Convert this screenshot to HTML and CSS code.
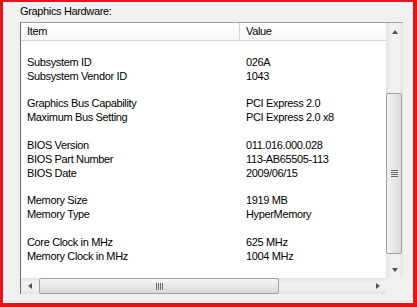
FILE: index.html
```html
<!DOCTYPE html>
<html lang="en">
<head>
  <meta charset="UTF-8" />
  <title>Graphics Hardware</title>
  <link rel="stylesheet" href="styles.css">
</head>
<body>
  <div class="frame">
    <div class="caption">Graphics Hardware:</div>

    <div class="listbox">
      <div class="view">
        <div class="header">
          <div class="col col-item">Item</div>
          <div class="col col-value">Value</div>
        </div>
        <div class="rows">
          <div class="row"><span></span><span></span></div>
          <div class="row"><span>Subsystem ID</span><span>026A</span></div>
          <div class="row"><span>Subsystem Vendor ID</span><span>1043</span></div>
          <div class="row"><span></span><span></span></div>
          <div class="row"><span>Graphics Bus Capability</span><span>PCI Express 2.0</span></div>
          <div class="row"><span>Maximum Bus Setting</span><span>PCI Express 2.0 x8</span></div>
          <div class="row"><span></span><span></span></div>
          <div class="row"><span>BIOS Version</span><span>011.016.000.028</span></div>
          <div class="row"><span>BIOS Part Number</span><span>113-AB65505-113</span></div>
          <div class="row"><span>BIOS Date</span><span>2009/06/15</span></div>
          <div class="row"><span></span><span></span></div>
          <div class="row"><span>Memory Size</span><span>1919 MB</span></div>
          <div class="row"><span>Memory Type</span><span>HyperMemory</span></div>
          <div class="row"><span></span><span></span></div>
          <div class="row"><span>Core Clock in MHz</span><span>625 MHz</span></div>
          <div class="row"><span>Memory Clock in MHz</span><span>1004 MHz</span></div>
        </div>
      </div>

      <div class="vscroll">
        <div class="btn"><span class="arrow up"></span></div>
        <div class="track">
          <div class="vthumb"><span class="grip"></span></div>
        </div>
        <div class="btn"><span class="arrow down"></span></div>
      </div>

      <div class="hscroll">
        <div class="btn"><span class="arrow left"></span></div>
        <div class="track">
          <div class="hthumb"><span class="grip"></span></div>
        </div>
        <div class="btn"><span class="arrow right"></span></div>
      </div>

      <div class="corner"></div>
    </div>
  </div>
</body>
</html>
```

FILE: styles.css
```css
* {
  box-sizing: border-box;
}
body {
  margin: 0;
  font-family: "Liberation Sans", Arial, sans-serif;
  font-size: 11px;
  letter-spacing: -0.35px;
  color: #000;
}
.frame {
  width: 417px;
  height: 307px;
  background: #f0f0f0;
  border-style: solid;
  border-color: #e8141b;
  border-width: 2px 4px 4px 3px;
  padding: 3px 0 0 17px;
}
.caption {
  height: 17px;
  line-height: 13px;
}
.listbox {
  width: 383px;
  height: 272px;
  background: #fff;
  border-top: 1px solid #a0a0a0;
  border-left: 1px solid #6e6e6e;
  display: grid;
  grid-template-columns: 1fr 17px;
  grid-template-rows: 1fr 16px;
}
.view {
  overflow: hidden;
}
.header {
  display: flex;
  height: 18px;
  background: linear-gradient(#ffffff, #f7f8fa);
  border-bottom: 1px solid #d5d5d5;
}
.col {
  line-height: 17px;
  padding-left: 6px;
}
.col-item {
  width: 219px;
  border-right: 1px solid #d5d5d5;
}
.col-value {
  flex: 1;
}
.rows {
  padding-top: 1px;
}
.row {
  display: flex;
  height: 13.86px;
  line-height: 13.86px;
}
.row span:first-child {
  width: 219px;
  padding-left: 6px;
}
.row span:last-child {
  padding-left: 6px;
}
.vscroll {
  display: flex;
  flex-direction: column;
  background: linear-gradient(90deg, #e4e4e4, #f0f0f0 30%, #f0f0f0 70%, #e4e4e4);
}
.hscroll {
  display: flex;
  background: linear-gradient(#e4e4e4, #f0f0f0 30%, #f0f0f0 70%, #e4e4e4);
}
.corner {
  background: #f0f0f0;
}
.btn {
  flex: 0 0 17px;
  display: flex;
  align-items: center;
  justify-content: center;
}
.track {
  flex: 1;
  display: flex;
}
.vscroll .track {
  flex-direction: column;
}
.vthumb {
  margin: 53px 1px 7px 0;
  flex: 1;
  border: 1px solid #a0a0a0;
  border-radius: 2px;
  background: linear-gradient(90deg, #f2f2f2, #e8e8e8 50%, #dadada);
  display: flex;
  align-items: center;
  justify-content: center;
}
.hthumb {
  margin: 0 90px 0 1px;
  flex: 1;
  border: 1px solid #a0a0a0;
  border-radius: 2px;
  background: linear-gradient(#f4f4f4, #e8e8e8 50%, #d8d8d8);
  display: flex;
  align-items: center;
  justify-content: center;
}
.vthumb .grip {
  width: 7px;
  height: 7px;
  background: repeating-linear-gradient(#6a6a6a 0 1px, transparent 1px 2px);
}
.hthumb .grip {
  width: 7px;
  height: 7px;
  background: repeating-linear-gradient(90deg, #6a6a6a 0 1px, transparent 1px 2px);
}
.arrow {
  width: 0;
  height: 0;
  border: 3px solid transparent;
}
.arrow.up {
  border-bottom: 4px solid #505050;
  border-top-width: 0;
}
.arrow.down {
  border-top: 4px solid #505050;
  border-bottom-width: 0;
}
.arrow.left {
  border-right: 4px solid #505050;
  border-left-width: 0;
}
.arrow.right {
  border-left: 4px solid #505050;
  border-right-width: 0;
}
```
